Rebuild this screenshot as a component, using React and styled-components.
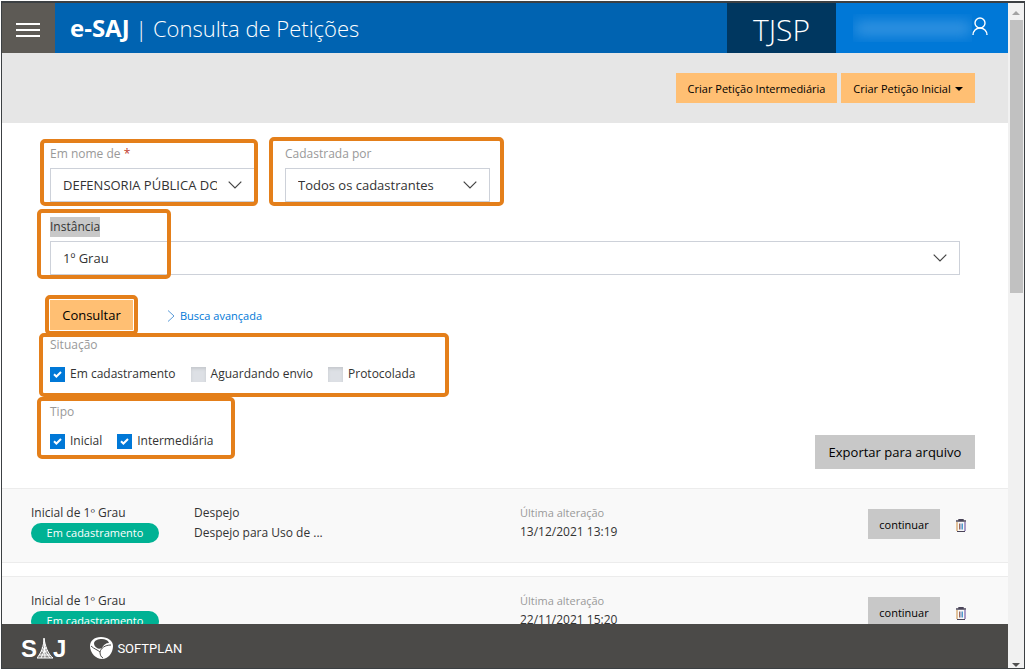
import React from "react";
import styled, { createGlobalStyle } from "styled-components";

const GlobalStyle = createGlobalStyle`
  * {
    box-sizing: border-box;
  }
  body {
    margin: 0;
    background: #fff;
    color: #333;
    font-family: "Open Sans", "Noto Sans", sans-serif;
    font-size: 12px;
    line-height: 20px;
  }
  button, select, input {
    font: inherit;
    margin: 0;
  }
`;

const Frame = styled.div`
  height: 100vh;
  padding: 1px;
`;

const Window = styled.div`
  height: 100%;
  display: grid;
  grid-template-columns: 1fr 16px;
  border: 1px solid #3c4043;
  border-top-width: 2px;
`;

const Page = styled.div`
  display: flex;
  flex-direction: column;
  min-width: 0;
  min-height: 0;
`;

const Header = styled.header`
  display: flex;
  flex-shrink: 0;
  height: 50px;
  background: #0063b1;
  color: #fff;
`;

const MenuButton = styled.button`
  width: 53px;
  padding: 9px 2px 0 0;
  border: 0;
  background: #5d5a55;
  color: #fff;
  cursor: pointer;
`;

const Title = styled.h1`
  flex: 1;
  margin: 0;
  padding-left: 15px;
  font-size: 22px;
  font-weight: 300;
  line-height: 50px;
  white-space: nowrap;
  strong {
    font-size: 24px;
    font-weight: 700;
  }
`;

const Court = styled.div`
  width: 109px;
  background: #003760;
  font-size: 30px;
  font-weight: 300;
  line-height: 54px;
  text-align: center;
`;

const User = styled.button`
  display: flex;
  align-items: center;
  justify-content: flex-end;
  width: 172px;
  padding: 0 20px 0 0;
  border: 0;
  background: #0078d7;
  color: #fff;
  cursor: pointer;
`;

const HiddenName = styled.span`
  display: grid;
  place-items: center;
  width: 119px;
  height: 28px;
  overflow: hidden;
  &::before {
    content: "";
    width: 116px;
    height: 13px;
    background: #3a97e2;
    filter: blur(7px);
  }
`;

const Actions = styled.div`
  display: flex;
  flex-shrink: 0;
  justify-content: flex-end;
  gap: 4px;
  padding: 20px 33px 20px 0;
  background: #e6e6e6;
`;

const Button = styled.button`
  display: inline-flex;
  align-items: center;
  justify-content: center;
  gap: 4px;
  height: ${(props) => (props.$large ? 34 : 30)}px;
  min-width: ${(props) => props.$width}px;
  padding: ${(props) => (props.$size ? 0 : 2)}px 0 0;
  border: 0;
  background: ${(props) => (props.$grey ? "#c8c8c8" : "#ffbf73")};
  color: #000;
  font-size: ${(props) => props.$size || 11}px;
  white-space: nowrap;
  cursor: pointer;
`;

const Main = styled.main`
  flex: 1;
  min-height: 0;
  overflow: hidden;
`;

const Form = styled.form`
  padding: 21px 33px 19px 48px;
`;

const Marked = styled.div`
  position: relative;
  width: ${(props) => (props.$fit ? "fit-content" : "auto")};
  margin-bottom: ${(props) => props.$space || 0}px;
`;

const Marker = styled.span`
  position: absolute;
  inset: ${(props) => props.$inset};
  width: ${(props) => props.$width || "auto"};
  border: 4px solid #e47f1a;
  border-radius: 5px;
  pointer-events: none;
`;

const Fields = styled.div`
  display: grid;
  grid-template-columns: 205px 205px 1fr;
  gap: 15px 30px;
  padding-right: 15px;
`;

const Field = styled(Marked)`
  grid-column: ${(props) => (props.$wide ? "1 / -1" : "auto")};
`;

const Label = styled.label`
  display: block;
  width: fit-content;
  margin-bottom: 4px;
  color: ${(props) => (props.$selected ? "#333" : "#999")};
  background: ${(props) => (props.$selected ? "#c8c8c8" : "none")};
`;

const Required = styled.span`
  color: #c0392b;
`;

const SelectBox = styled.div`
  display: grid;
  grid-template-columns: 1fr 27px;
  align-items: center;
  select {
    grid-area: 1 / 1 / 2 / 3;
    width: 100%;
    height: 34px;
    padding: 0 37px 0 12px;
    border: 1px solid #cdd1d9;
    border-radius: 0;
    background: #fff;
    color: #333;
    font-size: 13px;
    appearance: none;
  }
  svg {
    grid-area: 1 / 2;
    pointer-events: none;
  }
`;

const Submit = styled.div`
  display: flex;
  align-items: center;
  gap: 34px;
  margin: 25px 0 5px;
`;

const Advanced = styled.a`
  display: flex;
  align-items: center;
  gap: 5px;
  padding-top: 2px;
  color: #0078d7;
  font-size: 11px;
  text-decoration: none;
`;

const Filters = styled.div`
  display: flex;
  align-items: flex-end;
  justify-content: space-between;
`;

const FilterGroup = styled.fieldset`
  min-width: 0;
  margin: 0;
  padding: 0;
  border: 0;
  legend {
    margin-bottom: 9px;
    padding: 0;
    color: #999;
  }
`;

const Options = styled.div`
  display: flex;
  gap: 15px;
`;

const Option = styled.label`
  display: flex;
  align-items: center;
  gap: 5px;
  white-space: nowrap;
`;

const Tick = styled.span`
  display: grid;
  place-items: center;
  height: 15px;
  input {
    grid-area: 1 / 1;
    width: 15px;
    height: 15px;
    background: #dde0e5;
    box-shadow: inset 0 2px 3px #c6c9ce;
    appearance: none;
  }
  input:checked {
    background: #0078d7;
    box-shadow: none;
  }
  svg {
    grid-area: 1 / 1;
    z-index: 1;
    pointer-events: none;
    visibility: hidden;
  }
  input:checked + svg {
    visibility: visible;
  }
`;

const List = styled.ul`
  display: flex;
  flex-direction: column;
  gap: 13px;
  margin: 0;
  padding: 0;
  list-style: none;
`;

const Item = styled.li`
  display: grid;
  grid-template-columns: 163px 326px 1fr auto;
  height: 75px;
  padding: 14px 42px 0 29px;
  border: solid #ececec;
  border-width: 1px 0;
  background: #f9f9f9;
`;

const Badge = styled.span`
  display: block;
  width: 128px;
  border-radius: 10px;
  background: #00b294;
  color: #fff;
  font-size: 11px;
  font-weight: 500;
  text-align: center;
`;

const Changed = styled.div`
  line-height: 19px;
`;

const Muted = styled.div`
  color: #999;
  font-size: 11px;
`;

const ItemActions = styled.div`
  display: flex;
  align-items: center;
  gap: 16px;
  height: 42px;
`;

const IconButton = styled.button`
  display: flex;
  padding: 3px 0 0;
  border: 0;
  background: none;
  cursor: pointer;
`;

const Footer = styled.footer`
  display: flex;
  flex-shrink: 0;
  align-items: center;
  gap: 24px;
  height: 44px;
  padding: 5px 0 0 19px;
  background: #4b4a48;
  color: #fff;
`;

const Saj = styled.span`
  display: flex;
  align-items: center;
  font: bold 24px/24px "Liberation Sans", sans-serif;
`;

const Softplan = styled.span`
  display: flex;
  align-items: center;
  gap: 4px;
  font: 13px/20px Roboto, sans-serif;
`;

const Scrollbar = styled.div`
  display: flex;
  flex-direction: column;
  align-items: center;
  justify-content: space-between;
  padding: 8px 0 1px;
  background: #f1f1f1;
`;

const Thumb = styled.div`
  flex: 0 1 273px;
  width: 13px;
  margin: 5px 0 auto;
  background: #c1c1c1;
`;

const Arrow = ({ down, color }) => (
  <svg width="8" height="4" fill={color}>
    <path d={down ? "M0 0h8L4 4z" : "M0 4h8L4 0z"} />
  </svg>
);

const Chevron = () => (
  <svg width="14" height="8" fill="none" stroke="#444" strokeWidth="1.2">
    <path d="M.7.7 7 7 13.3.7" />
  </svg>
);

const Trash = () => (
  <svg width="10" height="13" fill="none" stroke="#4a4458">
    <path d="M0 2h10M3 1.5V.5h4v1" strokeWidth="1.4" />
    <path d="M1 12.5h8" />
    <path d="M1 3v9" stroke="#c98a3c" />
    <path d="M9 3v9" stroke="#5b3f96" />
    <path d="M3.5 4.5v6" stroke="#a06a5a" />
    <path d="M5 4.5v6" stroke="#5a6fa8" />
    <path d="M6.5 4.5v6" stroke="#4a9fd0" />
  </svg>
);

const Select = ({ id, value }) => (
  <SelectBox>
    <select id={id} defaultValue={value}>
      <option>{value}</option>
    </select>
    <Chevron />
  </SelectBox>
);

const Check = ({ label, checked }) => (
  <Option>
    <Tick>
      <input type="checkbox" defaultChecked={checked} />
      <svg width="9" height="7" fill="none" stroke="#fff" strokeWidth="2">
        <path d="M1 3.2 3.4 5.5 8 1" />
      </svg>
    </Tick>
    {label}
  </Option>
);

const petitions = [
  {
    id: 1,
    subject: ["Despejo", "Despejo para Uso de ..."],
    changedAt: "13/12/2021 13:19",
  },
  { id: 2, subject: [], changedAt: "22/11/2021 15:20" },
];

const Petition = ({ subject, changedAt }) => (
  <Item>
    <div>
      Inicial de 1º Grau
      <Badge>Em cadastramento</Badge>
    </div>
    <div>
      {subject.map((line) => (
        <div key={line}>{line}</div>
      ))}
    </div>
    <Changed>
      <Muted>Última alteração</Muted>
      {changedAt}
    </Changed>
    <ItemActions>
      <Button $grey $width={72}>
        continuar
      </Button>
      <IconButton aria-label="Excluir">
        <Trash />
      </IconButton>
    </ItemActions>
  </Item>
);

export default () => (
  <Frame>
    <GlobalStyle />
    <Window>
      <Page>
        <Header>
          <MenuButton aria-label="Menu">
            <svg width="24" height="14" stroke="#fff" strokeWidth="2">
              <path d="M0 1h24M0 7h24M0 13h24" />
            </svg>
          </MenuButton>
          <Title>
            <strong>e-SAJ</strong> | Consulta de Petições
          </Title>
          <Court>TJSP</Court>
          <User aria-label="Usuário">
            <HiddenName />
            <svg
              width="16"
              height="24"
              fill="none"
              stroke="#fff"
              strokeWidth="1.4"
            >
              <circle cx="8" cy="7" r="5" />
              <path d="M1 19c0-4 3-7 7-7s7 3 7 7" />
            </svg>
          </User>
        </Header>
        <Actions>
          <Button $width={161}>Criar Petição Intermediária</Button>
          <Button $width={134}>
            Criar Petição Inicial <Arrow down color="#000" />
          </Button>
        </Actions>
        <Main>
          <Form onSubmit={(e) => e.preventDefault()}>
            <Fields>
              <Field>
                <Label htmlFor="nome">
                  Em nome de <Required>*</Required>
                </Label>
                <Select id="nome" value="DEFENSORIA PÚBLICA DO ESTADO" />
                <Marker $inset="-5px -3px -4px -10px" />
              </Field>
              <Field>
                <Label htmlFor="cadastrante">Cadastrada por</Label>
                <Select id="cadastrante" value="Todos os cadastrantes" />
                <Marker $inset="-7px -14px -4px -16px" />
              </Field>
              <Field $wide>
                <Label htmlFor="instancia" $selected>
                  Instância
                </Label>
                <Select id="instancia" value="1º Grau" />
                <Marker $inset="-8px auto -4px -13px" $width="134px" />
              </Field>
            </Fields>
            <Submit>
              <Marked $fit>
                <Button $width={83} $size={13}>
                  Consultar
                </Button>
                <Marker $inset="-5px -5px -5px -5px" />
              </Marked>
              <Advanced href="#avancada">
                <svg width="8" height="12" fill="none" stroke="#5a9bd8">
                  <path d="M1 .5 7 6l-6 5.5" />
                </svg>
                Busca avançada
              </Advanced>
            </Submit>
            <Filters>
              <div>
                <Marked $fit $space={18}>
                  <FilterGroup>
                    <legend>Situação</legend>
                    <Options>
                      <Check label="Em cadastramento" checked />
                      <Check label="Aguardando envio" />
                      <Check label="Protocolada" />
                    </Options>
                  </FilterGroup>
                  <Marker $inset="-2px -33px -13px -11px" />
                </Marked>
                <Marked $fit $space={18}>
                  <FilterGroup>
                    <legend>Tipo</legend>
                    <Options>
                      <Check label="Inicial" checked />
                      <Check label="Intermediária" checked />
                    </Options>
                  </FilterGroup>
                  <Marker $inset="-5px -22px -8px -13px" />
                </Marked>
              </div>
              <Button $grey $large $width={160} $size={13}>
                Exportar para arquivo
              </Button>
            </Filters>
          </Form>
          <List>
            {petitions.map((petition) => (
              <Petition key={petition.id} {...petition} />
            ))}
          </List>
        </Main>
        <Footer>
          <Saj>
            S
            <svg width="16" height="22" fill="none" stroke="#fff">
              <path d="M7 0C7 8 4 15 0 20h16C11 16 8 8 7 0z" fill="#8a8988" />
              <path d="M7 1l1 19M5 9l8 11M9 9 4 20M4 13h6M2 17h11" />
            </svg>
            J
          </Saj>
          <Softplan>
            <svg width="23" height="23">
              <path
                d="M0 9C0 4 4 0 11 0s12 4 12 9c0 7-5 13-11 13S0 16 0 9z"
                fill="#fff"
              />
              <path
                d="M4 6c1-3 4-4 8-4 3 0 6 1 7 4-3 0-6 2-7 5-2 1-4 1-5 0-2-1-3-3-3-5z"
                fill="#4b4a48"
              />
              <path
                d="M1 9c3 3 7 4 9 6M21 8c-6 0-10 3-11 7 0 3 1 5 3 6"
                fill="none"
                stroke="#4b4a48"
              />
            </svg>
            SOFTPLAN
          </Softplan>
        </Footer>
      </Page>
      <Scrollbar>
        <Arrow color="#a3a3a3" />
        <Thumb />
        <Arrow down color="#505050" />
      </Scrollbar>
    </Window>
  </Frame>
);
